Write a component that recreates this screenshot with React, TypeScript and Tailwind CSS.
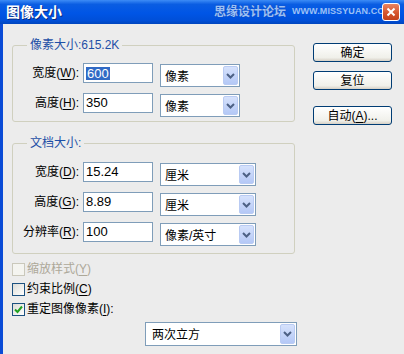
import type { ReactNode } from 'react';

const font = "font-['Liberation_Sans','Noto_Sans_CJK_SC',sans-serif]";

function U({ children }: { children: ReactNode }) {
  return <span className="underline underline-offset-[2px]">{children}</span>;
}

function Chevron() {
  return (
    <svg width="9" height="6" viewBox="0 0 9 6">
      <path d="M1 1 L4.5 4.5 L8 1" stroke="#4D6185" strokeWidth="2" fill="none" />
    </svg>
  );
}

function Select({ value, w }: { value: string; w: string }) {
  return (
    <div className={`flex h-[23px] items-center border border-[#7F9DB9] bg-white ${w}`}>
      <span className="flex-1 pl-[4px] pt-[2px] text-[12px] leading-[16px]">{value}</span>
      <span className="mr-[1px] flex h-[19px] w-[15px] items-center justify-center rounded-[2px] border border-[#B9CBF3] bg-[linear-gradient(#D6E2FC,#B4C8F6)]">
        <Chevron />
      </span>
    </div>
  );
}

function Row({ label, value, unit, selW, selected }: { label: ReactNode; value: string; unit: string; selW: string; selected?: boolean }) {
  return (
    <div className="flex h-[24px] items-start">
      <span className="w-[66px] text-right text-[12px] leading-[20px]">{label}</span>
      <div className="ml-[4px] flex h-[20px] w-[70px] items-center border border-[#7F9DB9] bg-white pl-[2px] text-[13px]">
        {selected ? <span className="bg-[#316AC5] px-[1px] leading-[13px] text-white">{value}</span> : <span>{value}</span>}
      </div>
      <div className="ml-[7px] mt-[1px]">
        <Select value={unit} w={selW} />
      </div>
    </div>
  );
}

function Check({ checked, disabled, children }: { checked?: boolean; disabled?: boolean; children: ReactNode }) {
  return (
    <div className="flex h-[20px] items-center">
      <span
        className={`flex h-[13px] w-[13px] items-center justify-center border ${
          disabled ? 'border-[#CAC8BB] bg-[#F4F4F0]' : 'border-[#1C5180] bg-[linear-gradient(135deg,#DCDCD7,#FFFFFF)]'
        }`}
      >
        {checked && (
          <svg width="9" height="9" viewBox="0 0 9 9">
            <path d="M1 4.5 L3.5 7 L8 1.5" stroke="#21A121" strokeWidth="2" fill="none" />
          </svg>
        )}
      </span>
      <span className={`ml-[2px] text-[12px] ${disabled ? 'text-[#ACA899]' : 'text-black'}`}>{children}</span>
    </div>
  );
}

function Button({ children, className }: { children: ReactNode; className?: string }) {
  return (
    <div
      className={`flex h-[19px] w-[79px] items-center justify-center rounded-[3px] border border-[#003C74] bg-[linear-gradient(#FFFFFF,#F0F0EA_80%,#D6D0C5)] text-[12px] ${className ?? ''}`}
    >
      {children}
    </div>
  );
}

export default function App() {
  return (
    <div className={`flex h-[354px] w-[404px] flex-col overflow-hidden bg-[#ECECEC] text-black ${font}`}>
      {/* title bar */}
      <div className="flex h-[24px] shrink-0 items-center bg-[linear-gradient(#3D8CF6,#0A5DE2_18%,#0055E6_55%,#004FD8_85%,#0045BE)] pl-[6px] pr-[4px]">
        <span className="text-[14px] font-bold text-white [text-shadow:1px_1px_#0A2A80]">图像大小</span>
        <span className="ml-auto text-[12px] font-bold text-[#9CC0F5] [text-shadow:0_0_1px_#1B3F9E]">思缘设计论坛</span>
        <span className="ml-[6px] text-[9px] font-bold tracking-[0.1px] text-[#9CC0F5]">WWW.MISSYUAN.COM</span>
        <span className="relative z-10 -ml-[10px] flex h-[18px] w-[18px] items-center justify-center rounded-[3px] border border-white bg-[linear-gradient(#E9845F,#D4522C_60%,#C2411C)]">
          <svg width="10" height="10" viewBox="0 0 10 10">
            <path d="M1.5 1.5 L8.5 8.5 M8.5 1.5 L1.5 8.5" stroke="white" strokeWidth="2" />
          </svg>
        </span>
      </div>

      {/* body */}
      <div className="flex flex-1 border-l-[3px] border-l-[#0A4BD6] pl-[9px] pt-[14px]">
        <div className="flex w-[283px] flex-col">
          <fieldset className="rounded-[3px] border border-[#D0D0BF] pb-[4px]">
            <legend className="ml-[14px] px-[3px] text-[12px] leading-[14px] text-[#1E4FA6]">像素大小:615.2K</legend>
            <div className="flex flex-col gap-[6px] pt-[11px]">
              <Row label={<>宽度(<U>W</U>):</>} value="600" unit="像素" selW="w-[80px]" selected />
              <Row label={<>高度(<U>H</U>):</>} value="350" unit="像素" selW="w-[80px]" />
            </div>
          </fieldset>

          <fieldset className="mt-[14px] rounded-[3px] border border-[#D0D0BF] pb-[7px]">
            <legend className="ml-[14px] px-[3px] text-[12px] leading-[14px] text-[#1E4FA6]">文档大小:</legend>
            <div className="flex flex-col gap-[6px] pt-[12px]">
              <Row label={<>宽度(<U>D</U>):</>} value="15.24" unit="厘米" selW="w-[96px]" />
              <Row label={<>高度(<U>G</U>):</>} value="8.89" unit="厘米" selW="w-[96px]" />
              <Row label={<>分辨率(<U>R</U>):</>} value="100" unit="像素/英寸" selW="w-[96px]" />
            </div>
          </fieldset>

          <div className="mt-[5px] flex flex-col">
            <Check disabled>
              缩放样式(<U>Y</U>)
            </Check>
            <Check>
              约束比例(<U>C</U>)
            </Check>
            <Check checked>
              重定图像像素(<U>I</U>):
            </Check>
          </div>

          <div className="ml-[133px] mt-[3px]">
            <div className="flex h-[24px] w-[152px] items-center border border-[#7F9DB9] bg-white">
              <span className="flex-1 pl-[6px] pt-[1px] text-[12px]">两次立方</span>
              <span className="mr-[1px] flex h-[20px] w-[15px] items-center justify-center rounded-[2px] border border-[#B9CBF3] bg-[linear-gradient(#D6E2FC,#B4C8F6)]">
                <Chevron />
              </span>
            </div>
          </div>
        </div>

        <div className="ml-[18px] flex w-[79px] flex-col pt-[5px]">
          <Button>确定</Button>
          <Button className="mt-[9px]">复位</Button>
          <Button className="mt-[16px]">
            自动(<U>A</U>)...
          </Button>
        </div>
      </div>
    </div>
  );
}
